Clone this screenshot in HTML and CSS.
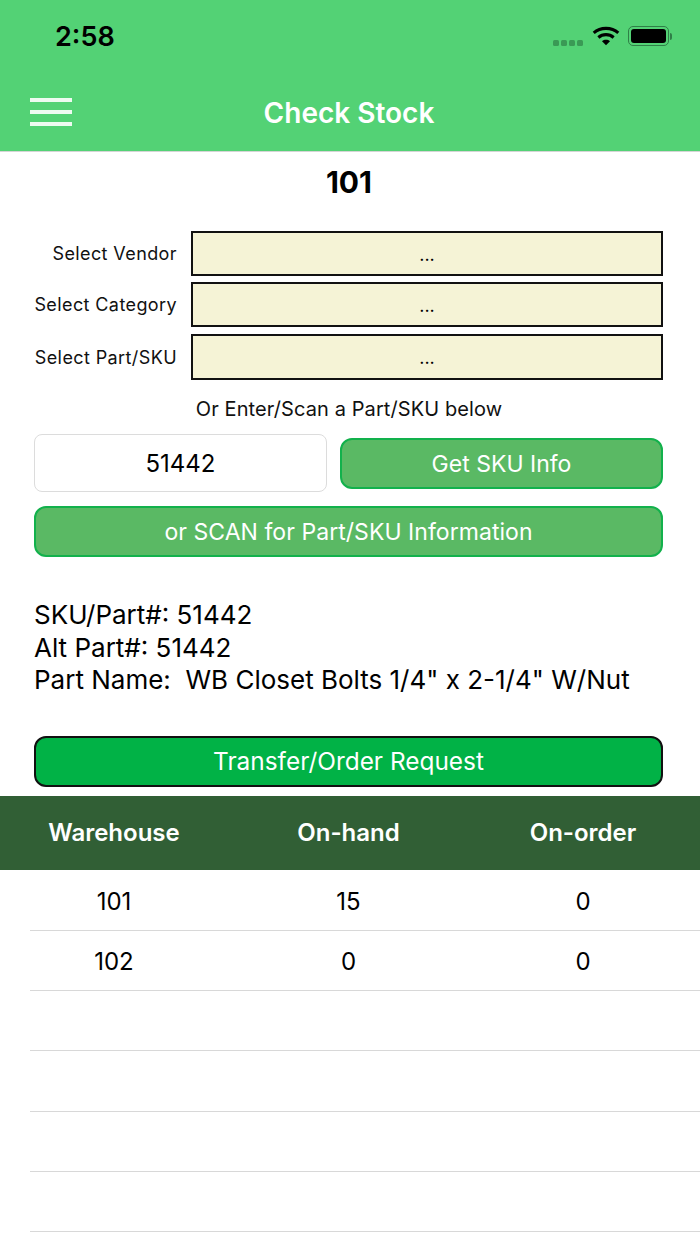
FILE: index.html
```html
<!DOCTYPE html>
<html lang="en">
<head>
<meta charset="UTF-8" />
<meta name="viewport" content="width=device-width, initial-scale=1" />
<title>Check Stock</title>
<link rel="stylesheet" href="styles.css">
</head>
<body>

<header class="app-header">
  <div class="status-bar">
    <span class="status-time">2:58</span>
    <div class="status-icons">
      <div class="signal"><i></i><i></i><i></i><i></i></div>
      <svg class="wifi" width="28" height="20" viewBox="0 0 30 22" aria-hidden="true">
        <path d="M1.5 7.6C9 .9 21 .9 28.500 7.600" fill="none" stroke="#000" stroke-width="3.400"/>
        <path d="M6.600 12.600C11.500 8.400 18.500 8.400 23.400 12.600" fill="none" stroke="#000" stroke-width="3.400"/>
        <path d="M10.600 16.700L15 21.200 19.400 16.700C16.800 14.600 13.200 14.600 10.600 16.700Z" fill="#000"/>
      </svg>
      <div class="battery"><div class="battery-fill"></div></div>
      <div class="battery-cap"></div>
    </div>
  </div>
  <div class="nav-bar">
    <div class="menu-icon"><span></span><span></span><span></span></div>
    <h1>Check Stock</h1>
  </div>
</header>

<main>
  <h2 class="store-number">101</h2>

  <div class="select-list">
    <div class="select-row">
      <label>Select Vendor</label>
      <div class="select-box">...</div>
    </div>
    <div class="select-row">
      <label>Select Category</label>
      <div class="select-box">...</div>
    </div>
    <div class="select-row">
      <label>Select Part/SKU</label>
      <div class="select-box">...</div>
    </div>
  </div>

  <p class="scan-note">Or Enter/Scan a Part/SKU below</p>

  <div class="sku-row">
    <div class="sku-input">51442</div>
    <button class="btn btn-sku">Get SKU Info</button>
  </div>
  <button class="btn btn-scan">or SCAN for Part/SKU Information</button>

  <div class="part-info">
    <div>SKU/Part#: 51442</div>
    <div>Alt Part#: 51442</div>
    <div>Part Name:&nbsp; WB Closet Bolts 1/4" x 2-1/4" W/Nut</div>
  </div>

  <button class="btn btn-transfer">Transfer/Order Request</button>

  <div class="stock-table">
    <div class="table-row table-head">
      <div>Warehouse</div>
      <div>On-hand</div>
      <div>On-order</div>
    </div>
    <div class="table-row">
      <div>101</div>
      <div>15</div>
      <div>0</div>
    </div>
    <div class="table-row">
      <div>102</div>
      <div>0</div>
      <div>0</div>
    </div>
    <div class="table-row"></div>
    <div class="table-row"></div>
    <div class="table-row"></div>
    <div class="table-row"></div>
  </div>
</main>

</body>
</html>
```

FILE: styles.css
```css
/* Base styles */
* {
  box-sizing: border-box;
}

html, body {
  margin: 0;
  padding: 0;
  background: #fff;
  color: #000;
  font-family: Inter, 'Liberation Sans', sans-serif;
}

body {
  width: 700px;
  height: 1244px;
  overflow: hidden;
}

/* Header */
.app-header {
  background: #53D275;
  height: 152px;
  border-bottom: 1px solid #d5d5d5;
}

.status-bar {
  height: 72px;
  display: flex;
  justify-content: space-between;
  align-items: center;
  padding: 0 28px 0 55px;
}

.status-time {
  font-size: 27px;
  font-weight: 600;
}

.status-icons {
  display: flex;
  align-items: center;
}

.signal {
  display: flex;
  gap: 2px;
  margin: 14px 9px 0 0;
}

.signal i {
  width: 6px;
  height: 6px;
  border-radius: 1.500px;
  background: #3A9A55;
}

.wifi {
  margin: 0 8px 0 0;
}

.battery {
  width: 41px;
  height: 20px;
  padding: 2px;
  border: 1.500px solid #2F7F47;
  border-radius: 5px;
}

.battery-fill {
  height: 100%;
  background: #000;
  border-radius: 3px;
}

.battery-cap {
  width: 2px;
  height: 7px;
  margin-left: 1px;
  background: #2F7F47;
  border-radius: 0 2px 2px 0;
}

.nav-bar {
  position: relative;
  height: 79px;
  display: flex;
  justify-content: center;
  align-items: center;
  padding-top: 3px;
}

.nav-bar h1 {
  margin: 0 0 0 -2px;
  color: #fff;
  font-size: 28px;
  font-weight: 600;
}

/* sits over the centred title row */
.menu-icon {
  position: absolute;
  left: 30px;
  top: 26px;
  width: 42px;
  display: flex;
  flex-direction: column;
  gap: 8px;
}

.menu-icon span {
  height: 4px;
  background: #EEFBF1;
}

/* Page content */
.store-number {
  margin: 12px 0 0;
  height: 36px;
  line-height: 36px;
  text-align: center;
  font-size: 30px;
  font-weight: 700;
  padding-right: 2px;
}

.select-list {
  margin-top: 31px;
  display: flex;
  flex-direction: column;
  gap: 6px;
}

.select-row {
  display: flex;
  align-items: center;
  padding-right: 37px;
}

.select-row:last-child {
  margin-top: 1px;
}

.select-row label {
  width: 177px;
  text-align: right;
  font-size: 18px;
  letter-spacing: 0.4px;
  color: #111;
}

.select-box {
  width: 472px;
  height: 45px;
  margin-left: 14px;
  border: 2px solid #111;
  background: #F5F3D6;
  text-align: center;
  line-height: 44px;
  font-size: 18px;
}

.select-row:last-child .select-box {
  height: 46px;
}

.scan-note {
  margin: 17px 0 0;
  text-align: center;
  font-size: 20px;
  letter-spacing: 0.1px;
  line-height: 24px;
  color: #111;
  padding-right: 2px;
}

.sku-row {
  margin: 13px 37px 0 34px;
  display: flex;
  align-items: center;
  gap: 13px;
}

.sku-input {
  width: 293px;
  height: 58px;
  border: 1px solid #dcdcdc;
  border-radius: 8px;
  text-align: center;
  line-height: 58px;
  font-size: 24px;
}

.btn {
  display: block;
  height: 51px;
  padding: 0;
  border: 2px solid #12B14C;
  border-radius: 12px;
  background: #5AB964;
  color: #fff;
  font-family: inherit;
  font-size: 23px;
}

.btn-sku {
  flex: 1;
  padding-top: 2px;
}

.btn-scan {
  width: 629px;
  margin: 14px 0 0 34px;
  letter-spacing: 0.05px;
}

.part-info {
  margin: 42px 0 0 34px;
  font-size: 26px;
  line-height: 32.500px;
}

.btn-transfer {
  width: 629px;
  margin: 39px 0 0 34px;
  background: #01B246;
  border-color: #111;
  font-size: 24.400px;
}

/* Stock table */
.stock-table {
  margin-top: 9px;
}

.table-row {
  display: grid;
  grid-template-columns: 168px 301px 168px;
  align-items: center;
  height: 60.300px;
  margin-left: 30px;
  padding-top: 2px;
  border-bottom: 1px solid #d8d8d8;
  text-align: center;
  font-size: 24px;
}

.table-head {
  height: 74px;
  margin: 0 0 1px;
  padding: 0 0 0 30px;
  border-bottom: 0;
  background: #315F35;
  color: #fff;
  font-weight: 600;
}
```
